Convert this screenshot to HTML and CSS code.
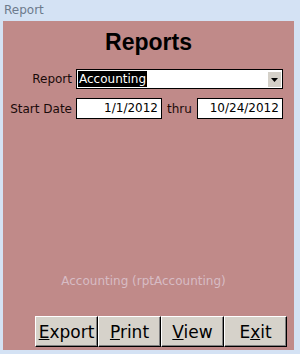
FILE: index.html
```html
<!DOCTYPE html>
<html lang="en">
<head>
  <meta charset="UTF-8">
  <title>Report</title>
  <link rel="stylesheet" href="styles.css">
</head>
<body>
  <div class="window">
    <div class="titlebar">Report</div>
    <div class="form">
      <h1>Reports</h1>
      <div class="row">
        <label class="lbl">Report</label>
        <div class="combo">
          <span class="sel">Accounting</span>
          <span class="drop"><svg width="7" height="4" viewBox="0 0 7 4"><path d="M0 0h7L3.5 4z" fill="#000"/></svg></span>
        </div>
      </div>
      <div class="row">
        <label class="lbl">Start Date</label>
        <div class="date">1/1/2012</div>
        <span class="thru">thru</span>
        <div class="date">10/24/2012</div>
      </div>
      <div class="spacer"></div>
      <p class="hint">Accounting (rptAccounting)</p>
      <div class="buttons">
        <button><u>E</u>xport</button>
        <button><u>P</u>rint</button>
        <button><u>V</u>iew</button>
        <button>E<u>x</u>it</button>
      </div>
    </div>
  </div>
</body>
</html>
```

FILE: styles.css
```css
body {
  margin: 0;
  font-family: "DejaVu Sans", sans-serif;
  background: #c8d8ee;
}
.window {
  width: 300px;
  height: 354px;
  box-sizing: border-box;
  background: #d4e2f4;
  padding: 0 6px 4px 3px;
  display: flex;
  flex-direction: column;
}
.titlebar {
  height: 21px;
  line-height: 21px;
  font-size: 12px;
  color: #6d7a8c;
  padding-left: 1px;
}
.form {
  flex: 1;
  background: #c08a89;
  display: flex;
  flex-direction: column;
}
h1 {
  margin: 8px 0 0;
  text-align: center;
  font-family: "Liberation Sans", sans-serif;
  font-size: 23px;
  font-weight: bold;
  color: #000;
  line-height: 26px;
}
.row {
  display: flex;
  align-items: center;
  margin-top: 14px;
}
.row + .row {
  margin-top: 9px;
}
.lbl {
  width: 69px;
  text-align: right;
  font-size: 12px;
  color: #1a0a0a;
  padding-right: 4px;
}
.combo {
  width: 207px;
  height: 20px;
  box-sizing: border-box;
  background: #fff;
  border: 1px solid #000;
  display: flex;
  align-items: center;
  padding-left: 1px;
}
.sel {
  background: #000;
  color: #fff;
  font-size: 12px;
  line-height: 16px;
  padding: 0 1px;
}
.drop {
  margin-left: auto;
  width: 14px;
  height: 16px;
  margin-right: 1px;
  background: #d4d0c8;
  border-left: 1px solid #fff;
  border-top: 1px solid #fff;
  box-sizing: border-box;
  display: flex;
  align-items: center;
  justify-content: center;
}
.date {
  width: 86px;
  height: 21px;
  box-sizing: border-box;
  background: #fff;
  border: 1px solid #000;
  font-size: 12px;
  text-align: right;
  line-height: 19px;
  padding-right: 3px;
  color: #000;
}
.thru {
  font-size: 12px;
  color: #1a0a0a;
  margin: 0 5px 0 5px;
}
.spacer {
  flex: 1;
}
.hint {
  margin: 0 0 28px;
  text-align: center;
  font-size: 12px;
  color: #d7bcc4;
  padding-right: 10px;
}
.buttons {
  display: flex;
  padding-left: 32px;
  margin-bottom: 3px;
}
button {
  width: 63px;
  height: 31px;
  background: #d6d2ca;
  border: 1px solid #000;
  border-top-color: #fff;
  border-left-color: #fff;
  box-shadow: inset -1px -1px 0 #808080;
  font-family: "DejaVu Sans", sans-serif;
  font-size: 17px;
  color: #000;
  padding: 0;
}
```
